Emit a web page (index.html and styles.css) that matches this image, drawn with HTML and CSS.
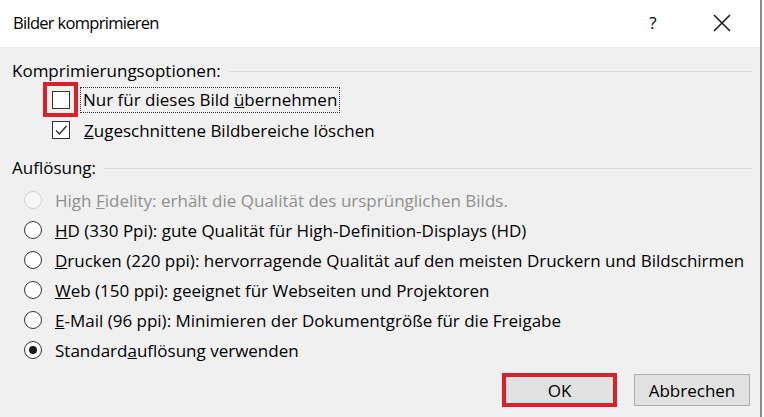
FILE: index.html
```html
<!DOCTYPE html>
<html lang="de">
<head>
<meta charset="utf-8">
<title>Bilder komprimieren</title>
<link rel="stylesheet" href="styles.css">
</head>
<body>
<div class="dialog">
  <div class="titlebar">
    <div class="title">Bilder komprimieren</div>
    <div class="tb-help">?</div>
    <div class="tb-close">
      <svg width="20" height="20" viewBox="0 0 20 20"><path d="M2 2 L18 18 M18 2 L2 18" stroke="#1a1a1a" stroke-width="1.6" fill="none"/></svg>
    </div>
  </div>
  <div class="content">
    <div class="group-head">
      <span class="group-label">Komprimierungsoptionen:</span>
      <span class="group-line"></span>
    </div>
    <div class="check-row first">
      <span class="highlight"><span class="checkbox"></span></span>
      <span class="label focus">Nur für dieses Bild <u>ü</u>bernehmen</span>
    </div>
    <div class="check-row second">
      <span class="box-wrap"><span class="checkbox checked">
        <svg width="16" height="16" viewBox="0 0 16 16"><path d="M3 8.5 L6.5 12 L13.5 4" stroke="#333" stroke-width="1.5" fill="none"/></svg>
      </span></span>
      <span class="label"><u>Z</u>ugeschnittene Bildbereiche löschen</span>
    </div>
    <div class="group-head res">
      <span class="group-label">Auflösung:</span>
      <span class="group-line"></span>
    </div>
    <div class="radios">
      <div class="radio-row disabled"><span class="radio"></span><span class="label">High <u>F</u>idelity: erhält die Qualität des ursprünglichen Bilds.</span></div>
      <div class="radio-row"><span class="radio"></span><span class="label"><u>H</u>D (330 Ppi): gute Qualität für High-Definition-Displays (HD)</span></div>
      <div class="radio-row"><span class="radio"></span><span class="label"><u>D</u>rucken (220 ppi): hervorragende Qualität auf den meisten Druckern und Bildschirmen</span></div>
      <div class="radio-row"><span class="radio"></span><span class="label"><u>W</u>eb (150 ppi): geeignet für Webseiten und Projektoren</span></div>
      <div class="radio-row"><span class="radio"></span><span class="label"><u>E</u>-Mail (96 ppi): Minimieren der Dokumentgröße für die Freigabe</span></div>
      <div class="radio-row"><span class="radio selected"></span><span class="label">Standard<u>a</u>uflösung verwenden</span></div>
    </div>
    <div class="buttons">
      <span class="btn-highlight"><span class="btn ok">OK</span></span>
      <span class="btn cancel">Abbrechen</span>
    </div>
  </div>
</div>
</body>
</html>
```
FILE: styles.css
```css
html, body {
  margin: 0;
  padding: 0;
  background: #ffffff;
}
body {
  font-family: "Open Sans", "Noto Sans", "Liberation Sans", sans-serif;
  font-size: 17px;
  color: #000000;
}
.dialog {
  width: 760px;
  height: 417px;
  border-right: 2px solid #8c8c8c;
  display: flex;
  flex-direction: column;
  overflow: hidden;
}
.titlebar {
  flex-shrink: 0;
  height: 47px;
  background: #ffffff;
  display: flex;
  align-items: center;
  padding-left: 13px;
}
.title {
  font-size: 16.5px;
  letter-spacing: -0.7px;
  flex: 1;
  padding-bottom: 2px;
}
.tb-help {
  font-size: 17px;
  width: 20px;
  text-align: center;
  margin-right: 49px;
  padding-bottom: 2px;
}
.tb-close {
  width: 20px;
  height: 20px;
  margin-right: 28px;
  margin-bottom: 2px;
}
.content {
  flex: 1;
  min-height: 0;
  background: #f0f0f0;
  padding: 0 8px 0 12px;
  display: flex;
  flex-direction: column;
}
.group-head {
  flex-shrink: 0;
  display: flex;
  align-items: center;
  height: 20px;
  margin-top: 13px;
}
.group-head.res {
  margin-top: 14px;
}
.group-line {
  flex: 1;
  height: 1px;
  background: #dadada;
  margin-left: 8px;
  margin-top: 2px;
}
.check-row {
  flex-shrink: 0;
  display: flex;
  align-items: center;
  padding-left: 31px;
}
.check-row.first {
  height: 35px;
  margin-top: 2px;
}
.check-row.second {
  height: 26px;
}
.highlight {
  width: 35px;
  height: 35px;
  box-sizing: border-box;
  border: 4px solid #d9202b;
  display: flex;
  align-items: center;
  justify-content: center;
}
.box-wrap {
  width: 35px;
  display: flex;
  justify-content: center;
}
.checkbox {
  width: 18px;
  height: 18px;
  box-sizing: border-box;
  border: 1.5px solid #333333;
  background: #ffffff;
  display: flex;
  align-items: center;
  justify-content: center;
}
.check-row .label {
  margin-left: 6px;
}
.label.focus {
  outline: 1px dotted #333;
  padding: 0 2px 1px 2px;
  margin-left: 3px;
}
.radios {
  flex-shrink: 0;
  display: flex;
  flex-direction: column;
  margin-top: 8px;
}
.radio-row {
  display: flex;
  align-items: center;
  height: 30px;
  padding-left: 12px;
}
.radio {
  flex-shrink: 0;
  width: 18px;
  height: 18px;
  box-sizing: border-box;
  border: 1.5px solid #333333;
  border-radius: 50%;
  background: #ffffff;
  position: relative;
}
.radio.selected::after {
  content: "";
  position: absolute;
  left: 3.5px;
  top: 3.5px;
  width: 8px;
  height: 8px;
  border-radius: 50%;
  background: #1b1b1b;
}
.radio-row .label {
  margin-left: 13px;
  white-space: nowrap;
}
.radio-row.disabled .radio {
  border-color: #cfcfcf;
  background: #f7f7f7;
}
.radio-row.disabled .label {
  color: #8f8f8f;
}
.buttons {
  flex-shrink: 0;
  display: flex;
  justify-content: flex-end;
  align-items: center;
  margin-top: 8px;
  gap: 17px;
  padding-right: 2px;
}
.btn-highlight {
  border: 4px solid #d9202b;
  display: flex;
}
.btn {
  display: flex;
  align-items: center;
  justify-content: center;
  box-sizing: border-box;
  background: #e1e1e1;
  border: 1px solid #adadad;
}
.btn.ok {
  width: 107px;
  height: 26px;
  border-color: #e1e1e1;
}
.btn.cancel {
  width: 116px;
  height: 32px;
}
```
